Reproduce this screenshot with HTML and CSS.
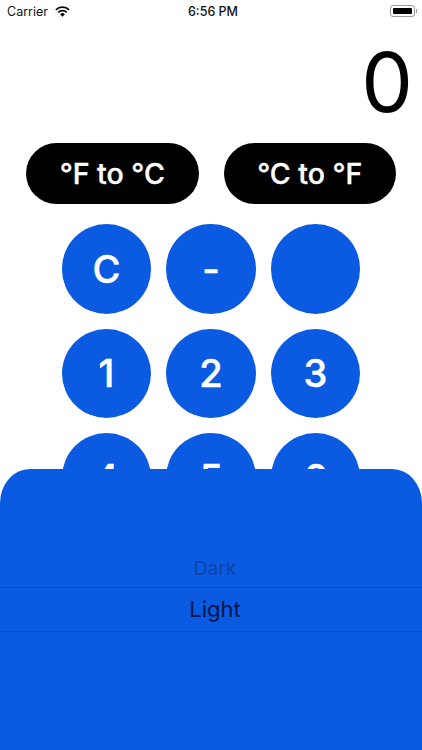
FILE: index.html
```html
<!DOCTYPE html>
<html lang="en">
<head>
<meta charset="utf-8">
<title>Temperature Calculator</title>
<link rel="stylesheet" href="styles.css">
</head>
<body>
<div class="screen">
  <header class="status">
    <div class="status-left">
      <span>Carrier</span>
      <svg class="wifi" viewBox="0 0 16 12" aria-hidden="true">
        <path d="M8 11.8 5.4 9a3.6 3.6 0 0 1 5.2 0Z" fill="#000"/>
        <path d="M3.4 6.9a6.6 6.6 0 0 1 9.2 0" fill="none" stroke="#000" stroke-width="1.9"/>
        <path d="M.8 4.1a10.4 10.4 0 0 1 14.4 0" fill="none" stroke="#000" stroke-width="1.9"/>
      </svg>
    </div>
    <div class="status-time">6:56 PM</div>
    <div class="status-right">
      <span class="battery"><span class="battery-fill"></span></span>
      <span class="battery-cap"></span>
    </div>
  </header>
  <div class="display">0</div>
  <div class="modes">
    <button class="mode">°F to °C</button>
    <button class="mode">°C to °F</button>
  </div>
  <div class="keys">
    <button class="key">C</button>
    <button class="key">-</button>
    <button class="key"></button>
    <button class="key">1</button>
    <button class="key">2</button>
    <button class="key">3</button>
    <button class="key">4</button>
    <button class="key">5</button>
    <button class="key">6</button>
  </div>
  <div class="sheet">
    <div class="option option-dim">Dark</div>
    <div class="option option-selected">Light</div>
  </div>
</div>
</body>
</html>
```
FILE: styles.css
```css
* { box-sizing: border-box; }
html, body { margin: 0; padding: 0; }
body { background: #fff; font-family: Inter, "Liberation Sans", sans-serif; }
.screen { position: relative; width: 422px; height: 750px; overflow: hidden; background: #fff; }
.status { display: grid; grid-template-columns: 1fr auto 1fr; align-items: center; height: 22px; padding: 0 5px 0 7px; font-size: 12.5px; color: #111; }
.status-left { display: flex; align-items: center; gap: 7px; }
.wifi { width: 15px; height: 11px; }
.status-time { padding-left: 2px; font-weight: 500; }
.status-right { display: flex; align-items: center; justify-content: flex-end; }
.battery { display: block; width: 25px; height: 12px; padding: 2px; border: 1px solid #999; border-radius: 3px; }
.battery-fill { display: block; height: 100%; background: #000; border-radius: 1px; }
.battery-cap { display: block; width: 1.5px; height: 4px; margin-left: 1px; background: #999; }
.display { height: 94px; padding: 18px 9px 0 0; text-align: right; font-size: 82px; font-weight: 400; line-height: 86px; color: #000; }
.modes { display: flex; justify-content: space-between; margin-top: 27px; padding: 0 26px; }
.mode { width: 172.5px; height: 61px; border: 0; border-radius: 31px; background: #000; color: #fff; font: 500 28.5px Inter, "Liberation Sans", sans-serif; -webkit-text-stroke: 0.4px #fff; padding: 0; }
.keys { display: grid; grid-template-columns: repeat(3, 89.5px); gap: 15px; justify-content: center; margin-top: 20px; }
.key { width: 89.5px; height: 89.5px; border: 0; border-radius: 50%; background: #0a5ae2; color: #fff; font: 500 38px Inter, "Liberation Sans", sans-serif; -webkit-text-stroke: 0.5px #fff; padding: 0; }
.sheet { position: absolute; left: 0; right: 0; top: 469px; bottom: 0; padding-top: 79px; background: #0a5ae2; border-radius: 30px 30px 0 0 / 34px 34px 0 0; }
.option { text-align: center; padding-left: 8px; }
.option-dim { height: 39.5px; font-size: 19px; line-height: 42px; color: #0a45ac; border-bottom: 1px solid #0a4fc4; }
.option-selected { height: 44px; font-size: 22px; line-height: 42px; color: #04164a; border-bottom: 1px solid #0a4fc4; }
```
